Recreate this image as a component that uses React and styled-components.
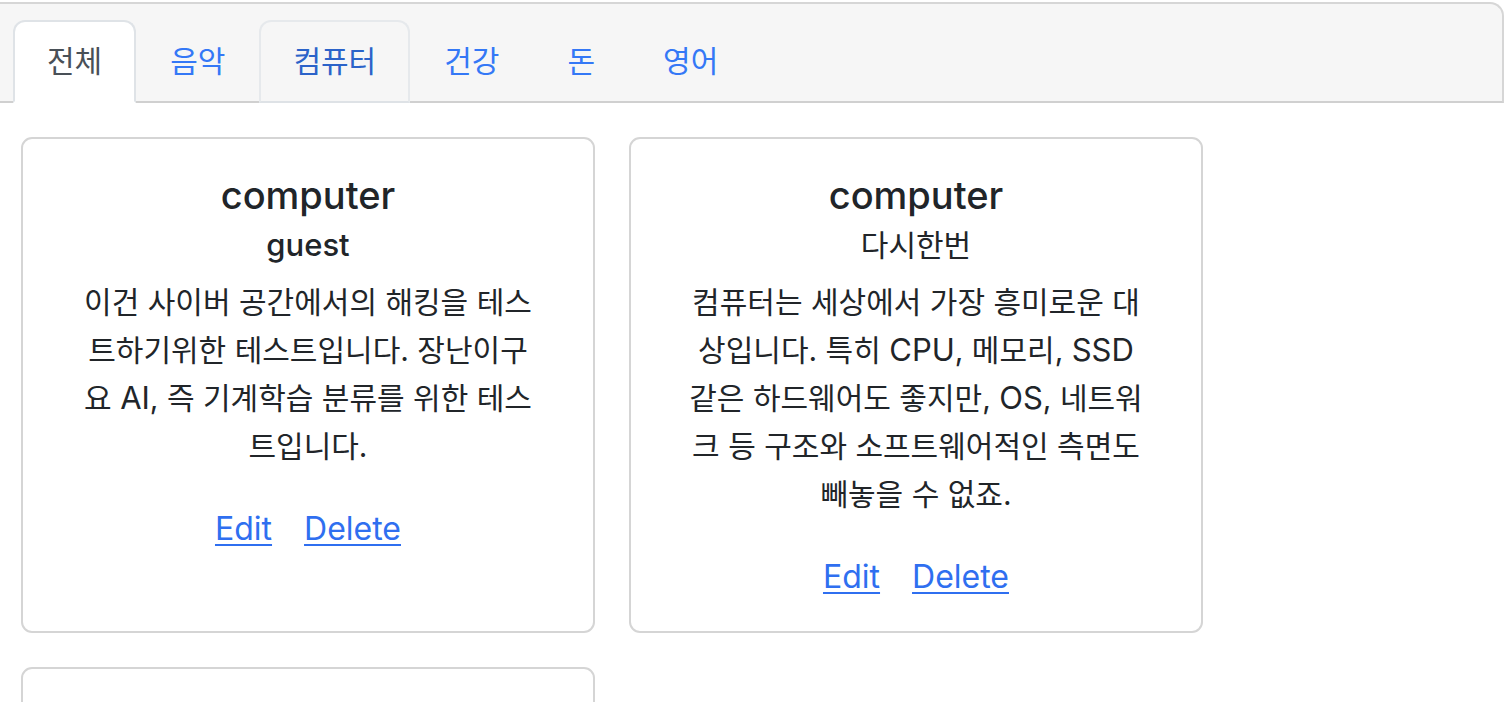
import React from 'react';
import styled, { createGlobalStyle } from 'styled-components';

const GlobalStyle = createGlobalStyle`
  body {
    margin: 0;
    background: #fff;
    color: #212529;
    font-family: Inter, "Noto Sans CJK KR", sans-serif;
  }
`;

const Header = styled.div`
  margin: 2px 0 0 -12px;
  padding: 16px 0 0 23px;
  background: #f6f6f6;
  border: 2px solid #d6d6d6;
  border-bottom-color: #d0d0d0;
  border-radius: 0 14px 0 0;
`;

const TabList = styled.ul`
  display: flex;
  margin: 0 0 -2px;
  padding: 0;
  list-style: none;
`;

const tabColor = state =>
  state === 'active' ? '#495057' : state === 'hover' ? '#2b63c9' : '#3478f6';

const Tab = styled.li`
  padding: 16px 32px;
  border: 2px solid transparent;
  border-radius: 12px 12px 0 0;
  font-size: 30px;
  line-height: 47px;
  color: ${props => tabColor(props.state)};
  cursor: pointer;

  ${props => props.state === 'active' ? `
    background: #fff;
    border-color: #dfe3e7 #dfe3e7 #fff;
  ` : null}

  ${props => props.state === 'hover' ? `
    border-color: #e6e9ec #e6e9ec #dee2e6;
  ` : null}
`;

const CardGrid = styled.div`
  display: grid;
  grid-template-columns: repeat(2, 574px);
  gap: 34px;
  padding: 34px 0 0 21px;
`;

const Card = styled.div`
  display: flex;
  flex-direction: column;
  align-items: center;
  min-height: ${props => props.empty ? '495px' : 'auto'};
  box-sizing: border-box;
  padding: 32px 16px 30px;
  border: 2px solid #d5d5d5;
  border-radius: 11px;
  text-align: center;
`;

const Title = styled.h5`
  margin: 0;
  font-size: 38px;
  font-weight: 500;
  line-height: 48px;
`;

const Subtitle = styled.h6`
  margin: 7px 0 0;
  font-size: ${props => props.ko ? '30px' : '31px'};
  font-weight: ${props => props.ko ? 400 : 500};
  line-height: 38px;
`;

const Description = styled.p`
  margin: 14px 0 0;
  font-size: 30px;
  line-height: 48px;
  white-space: nowrap;
`;

const Latin = styled.span`
  font-size: 31px;
`;

const Actions = styled.div`
  display: flex;
  gap: 32px;
  margin-top: 35px;
  font-size: 32px;
  line-height: 48px;
`;

const ActionLink = styled.a`
  color: #2f6ff0;
  text-decoration: underline;
  text-decoration-thickness: 2px;
  text-underline-offset: 4px;
  cursor: pointer;
`;

const tabs = [
  { name: '전체', state: 'active' },
  { name: '음악' },
  { name: '컴퓨터', state: 'hover' },
  { name: '건강' },
  { name: '돈' },
  { name: '영어' },
];

const posts = [
  {
    title: 'computer',
    author: 'guest',
    lines: [
      '이건 사이버 공간에서의 해킹을 테스',
      '트하기위한 테스트입니다. 장난이구',
      '요 AI, 즉 기계학습 분류를 위한 테스',
      '트입니다.',
    ],
  },
  {
    title: 'computer',
    author: '다시한번',
    lines: [
      '컴퓨터는 세상에서 가장 흥미로운 대',
      '상입니다. 특히 CPU, 메모리, SSD',
      '같은 하드웨어도 좋지만, OS, 네트워',
      '크 등 구조와 소프트웨어적인 측면도',
      '빼놓을 수 없죠.',
    ],
  },
];

// latin words are drawn a bit larger than hangul, as in the original font
const renderLine = line =>
  line.split(/([A-Za-z]+)/).map((part, i) =>
    /^[A-Za-z]+$/.test(part) ? <Latin key={i}>{part}</Latin> : part
  );

export default () => {
  return (
    <>
      <GlobalStyle />
      <Header>
        <TabList>
          {tabs.map(tab =>
            <Tab key={tab.name} state={tab.state}>{tab.name}</Tab>
          )}
        </TabList>
      </Header>
      <CardGrid>
        {posts.map((post, idx) =>
          <Card key={idx}>
            <Title>{post.title}</Title>
            <Subtitle ko={/[가-힣]/.test(post.author)}>{post.author}</Subtitle>
            <Description>
              {post.lines.map((line, i) =>
                <React.Fragment key={i}>
                  {i > 0 ? <br /> : null}
                  {renderLine(line)}
                </React.Fragment>
              )}
            </Description>
            <Actions>
              <ActionLink>Edit</ActionLink>
              <ActionLink>Delete</ActionLink>
            </Actions>
          </Card>
        )}
        {/* next card, below the fold */}
        <Card empty />
      </CardGrid>
    </>
  );
};
